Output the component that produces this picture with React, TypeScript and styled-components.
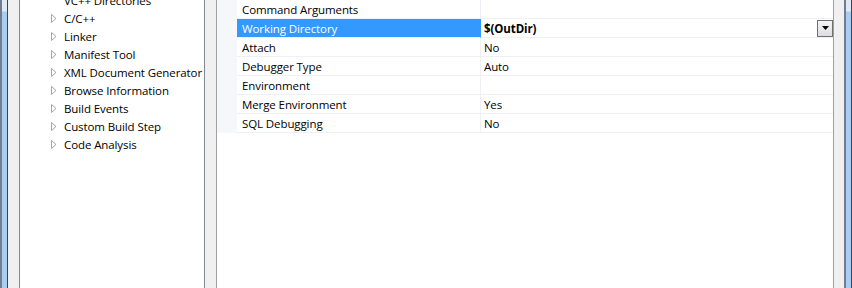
import React from "react";
import styled, { createGlobalStyle } from "styled-components";

const GlobalStyle = createGlobalStyle`
  html, body {
    margin: 0;
    padding: 0;
    background: #f0f0f0;
  }
  body {
    font-family: "Segoe UI", "Open Sans", "Noto Sans", sans-serif;
    font-size: 11.5px;
    letter-spacing: -0.1px;
    color: #000;
  }
`;

const treeItems = [
  { label: "VC++ Directories", expandable: false },
  { label: "C/C++", expandable: true },
  { label: "Linker", expandable: true },
  { label: "Manifest Tool", expandable: true },
  { label: "XML Document Generator", expandable: true },
  { label: "Browse Information", expandable: true },
  { label: "Build Events", expandable: true },
  { label: "Custom Build Step", expandable: true },
  { label: "Code Analysis", expandable: true },
];

const properties = [
  { name: "Command Arguments", value: "" },
  { name: "Working Directory", value: "$(OutDir)", selected: true },
  { name: "Attach", value: "No" },
  { name: "Debugger Type", value: "Auto" },
  { name: "Environment", value: "" },
  { name: "Merge Environment", value: "Yes" },
  { name: "SQL Debugging", value: "No" },
];

function Expander() {
  return (
    <svg width="6" height="9" viewBox="0 0 6 9">
      <path d="M0.5 0.5 L5 4.5 L0.5 8.5 Z" fill="#fff" stroke="#a6a6a6" strokeWidth="1" />
    </svg>
  );
}

function DropButton() {
  return (
    <DropDown>
      <svg width="7" height="4" viewBox="0 0 7 4">
        <path d="M0 0 H7 L3.5 4 Z" fill="#000" />
      </svg>
    </DropDown>
  );
}

export default function App() {
  return (
    <>
      <GlobalStyle />
      <Window>
        <FrameEdge />
        <Gutter />
        <TreePanel>
          <TreeList>
            {treeItems.map((item) => (
              <TreeRow key={item.label}>
                <ExpanderSlot>{item.expandable && <Expander />}</ExpanderSlot>
                <span>{item.label}</span>
              </TreeRow>
            ))}
          </TreeList>
        </TreePanel>
        <Gutter />
        <GridPanel>
          <GridTable>
            {properties.map((p) => (
              <GridRow key={p.name}>
                <Margin />
                <NameCell $selected={!!p.selected}>{p.name}</NameCell>
                <ValueCell $selected={!!p.selected}>
                  <span>{p.value}</span>
                  {p.selected && <DropButton />}
                </ValueCell>
              </GridRow>
            ))}
          </GridTable>
        </GridPanel>
        <RightGutter />
        <FrameEdge />
      </Window>
    </>
  );
}

const Window = styled.div`
  display: flex;
  width: 852px;
  height: 288px;
  overflow: hidden;
  background: #f0f0f0;
`;

const FrameEdge = styled.div`
  width: 5px;
  flex-shrink: 0;
  border-left: 2px solid #6f7d8f;
  border-right: 1px solid #3c4350;
  background: linear-gradient(#dfe9f5 0, #dfe9f5 11px, #a9cdf0 12px);
`;

const Gutter = styled.div`
  width: 11px;
  flex-shrink: 0;
`;

const RightGutter = styled.div`
  width: 10px;
  flex-shrink: 0;
`;

const TreePanel = styled.div`
  width: 184px;
  flex-shrink: 0;
  background: #fff;
  border-left: 1px solid #828790;
  border-right: 1px solid #828790;
  overflow: hidden;
`;

const TreeList = styled.ul`
  list-style: none;
  margin: -9px 0 0;
  padding: 0;
`;

const TreeRow = styled.li`
  display: flex;
  align-items: center;
  height: 18px;
  padding-left: 31px;
  white-space: nowrap;
`;

const ExpanderSlot = styled.span`
  display: flex;
  align-items: center;
  width: 13px;
  flex-shrink: 0;
`;

const GridPanel = styled.div`
  width: 616px;
  flex-shrink: 0;
  background: #fff;
  border-left: 1px solid #a0a0a0;
  border-right: 1px solid #a0a0a0;
`;

const GridTable = styled.div`
  display: flex;
  flex-direction: column;
`;

const GridRow = styled.div`
  display: grid;
  grid-template-columns: 20px 244px 1fr;
  height: 19px;
`;

const Margin = styled.div`
  background: #f5f7fb;
`;

const NameCell = styled.div<{ $selected: boolean }>`
  display: flex;
  align-items: center;
  padding-left: 5px;
  border-bottom: 1px solid #eef0f6;
  border-right: 1px solid ${(p) => (p.$selected ? "#3399ff" : "#eef0f6")};
  background: ${(p) => (p.$selected ? "#3399ff" : "#fff")};
  color: ${(p) => (p.$selected ? "#fff" : "#000")};
  white-space: nowrap;
`;

const ValueCell = styled.div<{ $selected: boolean }>`
  display: flex;
  align-items: center;
  justify-content: space-between;
  padding-left: 3px;
  border-bottom: 1px solid #eef0f6;
  font-weight: ${(p) => (p.$selected ? 700 : 400)};
`;

const DropDown = styled.div`
  display: flex;
  align-items: center;
  justify-content: center;
  width: 14px;
  height: 15px;
  border: 1px solid #707070;
  background: linear-gradient(#f4f4f4, #dddddd);
`;
